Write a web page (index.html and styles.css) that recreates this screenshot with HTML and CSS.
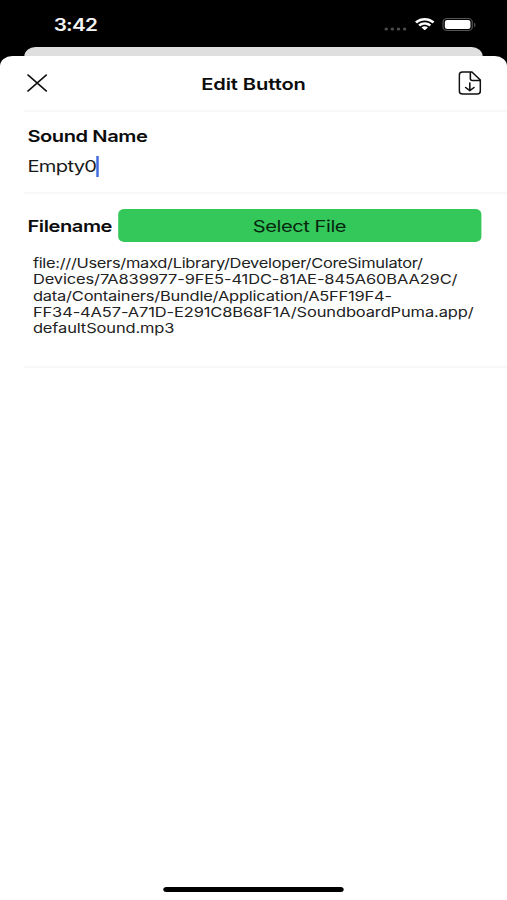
FILE: index.html
```html
<!DOCTYPE html>
<html lang="en">
<head>
  <meta charset="UTF-8">
  <title>Edit Button</title>
  <link rel="stylesheet" href="styles.css">
</head>

<body>
  <div class="screen">
    <div class="statusbar">
      <div class="time">3:42</div>
      <div class="indicators">
        <svg class="signal" viewBox="0 0 20 4" preserveAspectRatio="none">
          <circle cx="2" cy="2" r="1.5"/>
          <circle cx="7.3" cy="2" r="1.5"/>
          <circle cx="12.6" cy="2" r="1.5"/>
          <circle cx="17.9" cy="2" r="1.5"/>
        </svg>
        <svg class="wifi" viewBox="0 0 17 12" preserveAspectRatio="none">
          <path d="M8.5 2.4c2.4 0 4.5.9 6.1 2.4.1.1.3.1.4 0l1.2-1.2c.1-.1.1-.3 0-.5-4.3-4.1-11.1-4.1-15.4 0-.1.2-.1.4 0 .5L2 4.8c.1.1.3.1.4 0 1.6-1.5 3.7-2.4 6.1-2.4z"/>
          <path d="M8.5 6.3c1.3 0 2.5.5 3.4 1.3.2.1.4.1.5 0l1.2-1.2c.1-.2.1-.4 0-.5-2.9-2.7-7.3-2.7-10.2 0-.1.1-.1.3 0 .5l1.2 1.2c.1.1.3.1.5 0 .9-.8 2.1-1.3 3.4-1.3z"/>
          <path d="M10.900 8.9c.1-.1.1-.3 0-.4-1.4-1.2-3.4-1.2-4.8 0-.1.1-.1.3 0 .4l2.1 2.1c.2.2.4.2.6 0z"/>
        </svg>
        <div class="battery"><div class="level"></div></div>
        <div class="tip"></div>
      </div>
    </div>
    <div class="behind"></div>
    <div class="sheet">
      <div class="header">
        <svg class="close" viewBox="0 0 17 18" preserveAspectRatio="none">
          <path d="M1 1L16 17M16 1L1 17"/>
        </svg>
        <div class="headline">Edit Button</div>
        <svg class="save" viewBox="0 0 22 24" preserveAspectRatio="none">
          <path d="M13 1H4Q1 1 1 4V20Q1 23 4 23H18Q21 23 21 20V9zM11.500 1V7.500Q11.500 9.500 13.500 9.500H21M11 12V19.500M7 16.500L11 19.700L15 16.500"/>
        </svg>
      </div>
      <div class="row name">
        <div class="label">Sound Name</div>
        <div class="field"><span class="value">Empty0</span><span class="caret"></span></div>
      </div>
      <div class="row file">
        <div class="select">
          <div class="label">Filename</div>
          <button>Select File</button>
        </div>
        <div class="path">
          <div class="folder">file:///Users/maxd/Library/Developer/CoreSimulator/</div>
          <div>Devices/7A839977-9FE5-41DC-81AE-845A60BAA29C/</div>
          <div class="bundle">data/Containers/Bundle/Application/A5FF19F4-</div>
          <div>FF34-4A57-A71D-E291C8B68F1A/SoundboardPuma.app/</div>
          <div>defaultSound.mp3</div>
        </div>
      </div>
      <div class="home"></div>
    </div>
  </div>
</body>
</html>
```

FILE: styles.css
```css
body {
  margin: 0;
  background-color: black;
  font-family: Inter, "Liberation Sans", sans-serif;
  overflow: hidden;
}

/* 416px of layout, stretched to the 507px window */
.screen {
  display: flex;
  flex-direction: column;
  width: 416px;
  height: 900px;
  transform: scaleX(1.21875);
  transform-origin: 0 0;
}

.statusbar {
  display: flex;
  justify-content: space-between;
  box-sizing: border-box;
  height: 47px;
  padding: 13px 26px 0 44px;
  color: #f4f4f4;
}

.time {
  font-size: 17px;
  font-weight: 600;
  line-height: 24px;
  letter-spacing: -0.6px;
}

.indicators {
  display: flex;
  align-items: center;
  height: 23px;
}

.signal {
  width: 19px;
  height: 4px;
  margin: 8px 6px 0 0;
  fill: #4c4c4c;
}

.wifi {
  width: 17px;
  height: 13px;
  margin-right: 6px;
  fill: white;
}

.battery {
  box-sizing: border-box;
  width: 25px;
  height: 13px;
  padding: 1px;
  border: 1px solid #555;
  border-radius: 4px;
}

.level {
  height: 9px;
  border-radius: 2px;
  background-color: white;
}

.tip {
  width: 1px;
  height: 4px;
  margin-left: 1px;
  border-radius: 0 2px 2px 0;
  background-color: #555;
}

.behind {
  height: 9px;
  margin: 0 20px;
  border-radius: 9px 9px 0 0;
  background-color: #dfdfdf;
}

.sheet {
  display: flex;
  flex-direction: column;
  flex: 1;
  border-radius: 10px 10px 0 0;
  background-color: white;
}

.header {
  display: flex;
  align-items: center;
  justify-content: space-between;
  height: 54px;
  padding: 0 21px 0 22px;
}

.close {
  width: 17px;
  height: 18px;
}

.save {
  width: 19px;
  height: 24px;
}

.close path,
.save path {
  fill: none;
  stroke: #111;
  stroke-width: 1.5;
  stroke-linecap: round;
  stroke-linejoin: round;
}

.headline,
.label {
  color: #0c0c0c;
  font-size: 16.5px;
  font-weight: 600;
  line-height: 20px;
}

.headline {
  padding: 1px 0 0 1px;
  letter-spacing: -0.07px;
}

.label {
  letter-spacing: -0.36px;
}

.row {
  margin-left: 20px;
  padding-left: 2.5px;
  border-top: 2px solid #f7f7f7;
}

.name {
  height: 80px;
}

.name .label {
  padding-top: 14px;
}

.field {
  display: flex;
  align-items: center;
  height: 22px;
  margin-top: 9px;
}

.value {
  color: #1a1a1a;
  font-size: 16.5px;
  letter-spacing: -0.55px;
}

.caret {
  width: 2px;
  height: 21px;
  background-color: #3f6be0;
}

.file {
  height: 172px;
  border-bottom: 2px solid #f7f7f7;
}

.select {
  display: flex;
  align-items: center;
  gap: 5px;
  padding: 15px 21.5px 0 0;
}

button {
  flex: 1;
  height: 33px;
  padding: 0;
  border: none;
  border-radius: 5px;
  background-color: #34c759;
  color: #06260e;
  font-family: inherit;
  font-size: 16.5px;
  letter-spacing: -0.37px;
}

.path {
  margin: 13px 0 0 4.5px;
  color: #222;
  font-size: 13.5px;
  line-height: 16.25px;
  letter-spacing: -0.1px;
  white-space: nowrap;
}

.path .folder {
  letter-spacing: -0.26px;
}

.path .bundle {
  letter-spacing: -0.17px;
}

.home {
  width: 148px;
  height: 5px;
  margin: auto auto 8px;
  border-radius: 3px;
  background-color: black;
}
```
